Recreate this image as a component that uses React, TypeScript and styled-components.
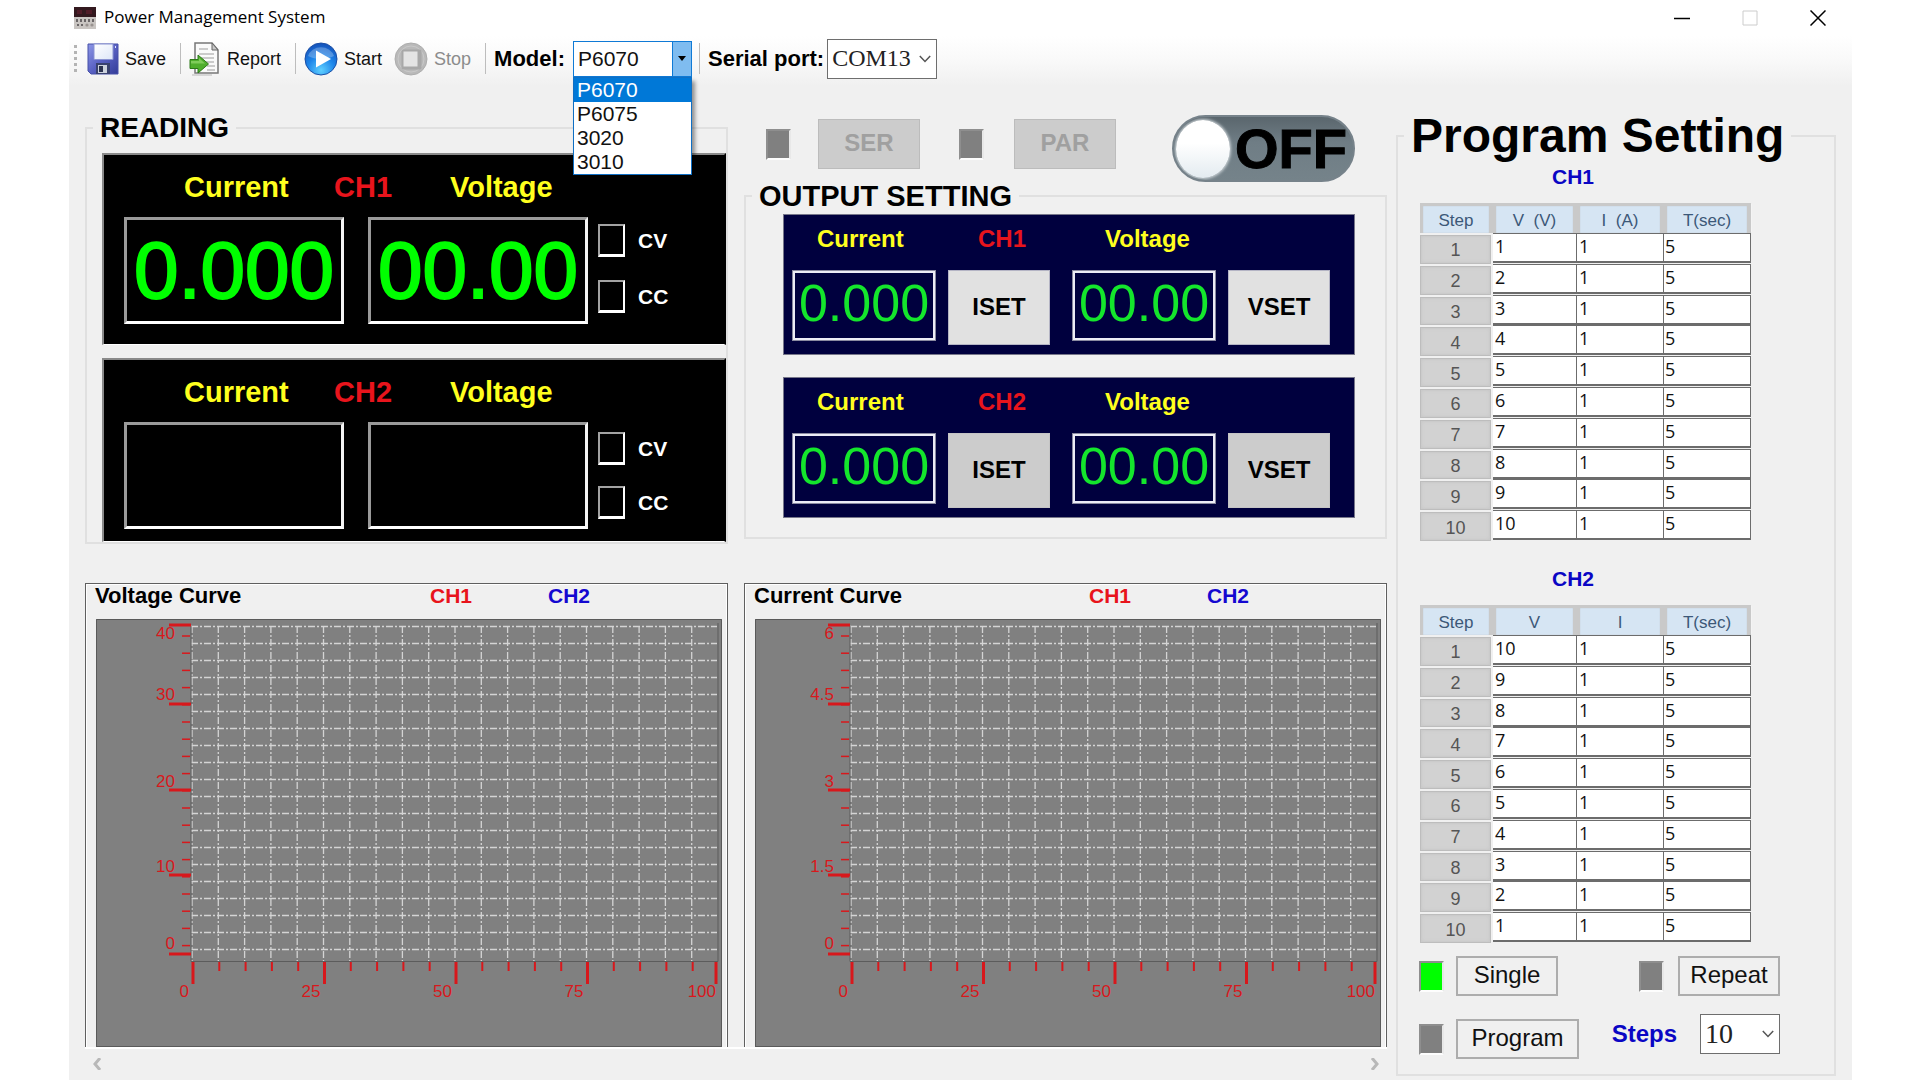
import React, { useState } from "react";
import styled, { createGlobalStyle } from "styled-components";

const SANS = '"Liberation Sans", Arial, sans-serif';
const SERIF = '"Liberation Serif", "Times New Roman", serif';
const UI = '"Open Sans", "Noto Sans", sans-serif';

const GlobalStyle = createGlobalStyle`
  *, *::before, *::after { box-sizing: border-box; }
  body { margin: 0; background: #fff; font-family: ${SANS}; color: #000; }
  button, input, select { font-family: inherit; margin: 0; border-radius: 0; }
`;

/* ---------- window frame ---------- */

const Window = styled.div`
  margin: 0 68px 0 69px;
  min-height: 100vh;
  background: linear-gradient(#fff 0, #fff 36px, #f9f9f9 60px, #f0f0f0 86px);
`;

const TitleBar = styled.header`
  display: flex;
  align-items: center;
  height: 36px;
  padding-left: 5px;
`;

const Title = styled.h1`
  flex: 1;
  margin: 0 0 2px 8px;
  font: 400 17px/24px ${UI};
`;

const CaptionButton = styled.button`
  display: grid;
  place-items: center;
  width: 68px;
  height: 34px;
  padding: 0;
  border: 0;
  background: none;
`;

/* ---------- toolbar ---------- */

const ToolBar = styled.div`
  display: flex;
  align-items: center;
  height: 45px;
  padding-left: 5px;
`;

const Grip = styled.span`
  width: 3px;
  height: 28px;
  margin-right: 10px;
  background: repeating-linear-gradient(#b4b4b4 0, #b4b4b4 3px, transparent 3px, transparent 6px);
`;

const ToolButton = styled.button`
  display: flex;
  align-items: center;
  gap: 6px;
  padding: 0 7px 0 0;
  border: 0;
  background: none;
  font-size: 18px;
  line-height: 22px;
  color: #111;
  & + & { margin-left: 5px; }
  &:disabled { color: #8c8c8c; }
`;

const Separator = styled.span`
  width: 1px;
  height: 31px;
  margin: 0 8px 0 7px;
  background: #bdbdbd;
`;

const ToolLabel = styled.label`
  font-size: 22px;
  font-weight: 700;
  line-height: 26px;
`;

const ComboWrap = styled.div`
  position: relative;
  width: 119px;
  margin-left: 8px;
`;

const ModelSelect = styled.select`
  display: block;
  appearance: none;
  width: 100%;
  height: 36px;
  padding: 0 24px 0 4px;
  border: 1px solid #0f7ad6;
  background: #fff;
  font-size: 21px;
  color: #111;
`;

const ComboArrow = styled.span`
  position: absolute;
  top: 1px;
  right: 1px;
  bottom: 1px;
  display: grid;
  place-items: center;
  width: 19px;
  border-left: 1px solid #0f7ad6;
  background: #7fbcf0;
  pointer-events: none;
`;

const ComboList = styled.ul`
  position: absolute;
  z-index: 5;
  top: 36px;
  left: 0;
  right: 0;
  margin: 0;
  padding: 0;
  border: 1px solid #0f6fc4;
  background: #fff;
  box-shadow: 3px 4px 4px rgba(0, 0, 0, 0.4);
  list-style: none;
`;

const ComboOption = styled.li<{ $active: boolean }>`
  padding-left: 3px;
  font-size: 21px;
  line-height: 24px;
  color: ${(p) => (p.$active ? "#fff" : "#111")};
  background: ${(p) => (p.$active ? "#0078d7" : "#fff")};
`;

const PlainCombo = styled.div<{ $width: number }>`
  position: relative;
  width: ${(p) => p.$width}px;
  ${ToolLabel} + & { margin-left: 3px; }
  svg {
    position: absolute;
    top: 14px;
    right: 6px;
    pointer-events: none;
  }
`;

const PlainSelect = styled.select<{ $size: number }>`
  display: block;
  appearance: none;
  width: 100%;
  height: 40px;
  padding: 0 0 2px 4px;
  border: 1px solid #6e6e6e;
  background: #fff;
  font-family: ${SERIF};
  font-size: ${(p) => p.$size}px;
  color: #222;
`;

/* ---------- page layout ---------- */

const Main = styled.main`
  display: grid;
  grid-template-columns: minmax(0, 1fr) 440px;
  align-items: start;
  gap: 9px;
  padding: 28px 16px 0;
`;

const Workspace = styled.div`
  display: grid;
  grid-template-columns: repeat(2, minmax(0, 1fr));
  align-items: start;
  column-gap: 16px;
  padding-top: 5px;
`;

const Group = styled.fieldset`
  min-width: 0;
  margin: 0;
  padding: 0;
  border: 2px solid #e0e0e0;
`;

const Legend = styled.legend<{ $size: number; $line: number }>`
  margin-left: 6px;
  padding: 0 7px;
  font-size: ${(p) => p.$size}px;
  font-weight: 700;
  line-height: ${(p) => p.$line}px;
  white-space: nowrap;
`;

/* ---------- reading ---------- */

const ReadingBody = styled.div`
  display: grid;
  gap: 13px;
  padding: 11px 0 0 15px;
`;

const ReadingPanel = styled.section<{ $bottom: number }>`
  padding: 17px 0 ${(p) => p.$bottom}px 20px;
  border: 2px solid #8a8a8a;
  border-right-color: #000;
  border-bottom: 1px solid #fff;
  background: #000;
`;

const ReadingHead = styled.div`
  display: grid;
  grid-template-columns: 150px 116px auto;
  margin-bottom: 15px;
  padding-left: 60px;
`;

const Caption = styled.span<{ $color: string; $size: number }>`
  font-size: ${(p) => p.$size}px;
  font-weight: 700;
  line-height: ${(p) => (p.$size > 28 ? 30 : 28)}px;
  color: ${(p) => p.$color};
`;

const ReadingRow = styled.div`
  display: flex;
  align-items: flex-start;
`;

const BigDisplay = styled.output`
  display: grid;
  place-items: center;
  width: 220px;
  height: 107px;
  margin-right: 24px;
  border: 3px solid #9a9a9a;
  border-right-color: #f4f4f4;
  border-bottom-color: #fff;
  font-size: 80px;
  line-height: 101px;
  color: #0f0;
  -webkit-text-stroke: 2px #0f0;
  & + & { margin-right: 10px; }
`;

const Lamps = styled.div<{ $top: number; $gap: number }>`
  display: grid;
  gap: ${(p) => p.$gap}px;
  padding-top: ${(p) => p.$top}px;
`;

const Lamp = styled.label`
  display: flex;
  align-items: center;
  gap: 13px;
  font-size: 21px;
  font-weight: 700;
  line-height: 24px;
  color: #fff;
`;

const LampBox = styled.input`
  appearance: none;
  width: 27px;
  height: 33px;
  border: 2px solid #a2a2a2;
  border-right-color: #fff;
  border-bottom: 3px solid #fff;
  background: #000;
`;

/* ---------- output ---------- */

const ModeBar = styled.div`
  display: flex;
  align-items: flex-start;
  justify-content: space-between;
  padding: 1px 32px 0 22px;
`;

const ModeSet = styled.div`
  display: flex;
  align-items: center;
  height: 58px;
  gap: 39px;
`;

const Pair = styled.div<{ $gap: number }>`
  display: flex;
  align-items: center;
  gap: ${(p) => p.$gap}px;
`;

const Led = styled.span<{ $on?: boolean }>`
  width: 25px;
  height: 31px;
  border: 2px solid #8e8e8e;
  border-right-color: #e8e8e8;
  border-bottom-color: #fdfdfd;
  background: ${(p) => (p.$on ? "#0f0" : "#808080")};
`;

const ModeButton = styled.button`
  width: 102px;
  height: 50px;
  padding: 0 0 2px;
  border: 1px solid #bcbcbc;
  background: #ccc;
  font-size: 24px;
  font-weight: 700;
  color: #a0a0a0;
`;

const PowerSwitch = styled.button`
  display: flex;
  align-items: center;
  gap: 5px;
  width: 183px;
  height: 67px;
  padding: 0 0 0 2px;
  border: 2px solid #76828a;
  border-radius: 34px;
  background: linear-gradient(#5a666d, #6f7d85 40%, #75838a);
  overflow: hidden;
  color: #000;
`;

const Knob = styled.span`
  flex: none;
  width: 54px;
  height: 58px;
  border-radius: 50%;
  background: linear-gradient(#fff 40%, #e3ebf0);
  box-shadow: 0 0 3px 1px #cfd6da;
`;

const SwitchText = styled.span`
  font-size: 56px;
  font-weight: 700;
  line-height: 60px;
  -webkit-text-stroke: 1px #000;
`;

const OutputBody = styled.div`
  display: grid;
  gap: 22px;
  padding: 4px 30px 19px 37px;
`;

const OutputPanel = styled.section`
  padding: 10px 8px 9px;
  border: 1px solid #77778a;
  background: #00003e;
`;

const OutputHead = styled.div`
  display: grid;
  grid-template-columns: 161px 127px auto;
  margin-bottom: 17px;
  padding-left: 25px;
`;

const OutputRow = styled.div`
  display: flex;
  gap: 22px;
`;

const OutputPair = styled.div`
  display: flex;
  align-items: flex-start;
  gap: 12px;
`;

const SmallDisplay = styled.output`
  display: grid;
  justify-items: center;
  width: 144px;
  height: 71px;
  border: 3px solid #ececf6;
  outline: 1px solid #8a8aa0;
  outline-offset: -1px;
  font-size: 52px;
  line-height: 60px;
  color: #14e62c;
`;

const SetButton = styled.button<{ $idle?: boolean }>`
  width: 102px;
  height: 75px;
  padding: 0 0 2px;
  border: 1px solid ${(p) => (p.$idle ? "#c4c4c4" : "#b4b4c4")};
  background: ${(p) => (p.$idle ? "#ccc" : "#e1e1e1")};
  font-size: 24px;
  font-weight: 700;
  color: #000;
`;

/* ---------- curves ---------- */

const CurvePanel = styled.section`
  margin-top: 39px;
  border: 1px solid #5f5f5f;
  border-bottom: 0;
  box-shadow: inset 1px 1px 0 #fff, inset -1px 0 0 #fff;
`;

const CurveHead = styled.div`
  display: grid;
  grid-template-columns: 335px 118px auto;
  align-items: center;
  height: 24px;
  margin-bottom: 11px;
  padding-left: 9px;
`;

const CurveTitle = styled.h2`
  margin: 0;
  font-size: 22px;
  line-height: 24px;
`;

const CurveKey = styled.span<{ $color: string }>`
  font-size: 21px;
  font-weight: 700;
  line-height: 24px;
  color: ${(p) => p.$color};
`;

const ChartArea = styled.div`
  margin: 0 5px 0 10px;
  background: #808080;
  svg { display: block; width: 100%; height: auto; }
`;

const ScrollStrip = styled.div`
  grid-column: 1 / -1;
  display: flex;
  justify-content: space-between;
  height: 33px;
  padding: 0 4px 2px;
  border-top: 2px solid #fff;
`;

const ScrollButton = styled.button`
  display: grid;
  place-items: center;
  width: 16px;
  padding: 0;
  border: 0;
  background: none;
`;

/* ---------- program ---------- */

const ProgramBody = styled.div`
  padding: 2px 54px 15px 22px;
`;

const ChannelTitle = styled.h3`
  margin: 0 0 14px;
  padding-left: 132px;
  font-size: 21px;
  line-height: 24px;
  color: #0a06c4;
`;

const StepTable = styled.table<{ $after: number }>`
  width: 331px;
  height: 338px;
  margin-bottom: ${(p) => p.$after}px;
  border-spacing: 0;
  table-layout: fixed;
`;

const HeadCell = styled.th<{ $width: number }>`
  width: ${(p) => p.$width}px;
  height: 30px;
  padding: 2px 0 0;
  border: 3px solid #c9c9c9;
  border-bottom: 0;
  border-right-width: 4px;
  background: #d6e5f3;
  box-shadow: inset 0 0 1px #aaa, 2px 0 0 -1px #f4f4f4;
  font-size: 17px;
  font-weight: 400;
  line-height: 24px;
  color: #3c5878;
  white-space: pre;
`;

const StepCell = styled.th`
  padding: 2px 0 0;
  border-top: 2px solid #f0f0f0;
  border-right: 2px solid #f0f0f0;
  background: #d2d2d2;
  box-shadow: inset 0 0 0 1px #bdbdbd, inset 0 0 3px 2px #c8c8c8;
  font-size: 18px;
  font-weight: 400;
  line-height: 20px;
  color: #555;
`;

const ValueCell = styled.td`
  padding: 0;
  vertical-align: top;
`;

const ValueInput = styled.input`
  display: block;
  width: 100%;
  height: 30px;
  padding: 0 0 3px 2px;
  border: 1px solid #6c6c6c;
  border-left-width: 0;
  border-bottom-width: 2px;
  background: #fff;
  font-family: ${UI};
  font-size: 18px;
  color: #111;
  td:last-child & { padding-left: 1px; }
`;

const Controls = styled.div`
  display: flex;
  justify-content: space-between;
  margin: 0 0 18px -1px;
  &:last-child { margin-bottom: 0; }
`;

const ProgramRow = styled(Controls)`
  height: 45px;
  > :first-child { align-self: flex-end; }
  > :last-child { align-self: flex-start; }
`;

const ActionButton = styled.button<{ $width: number }>`
  width: ${(p) => p.$width}px;
  height: 40px;
  padding: 0 0 2px;
  border: 2px solid #adadad;
  background: #f0f0f0;
  font-size: 24px;
  line-height: 28px;
  color: #111;
`;

const StepsLabel = styled.label`
  font-size: 24px;
  font-weight: 700;
  line-height: 28px;
  color: #0a06c4;
`;

/* ---------- icons ---------- */

const DeviceIcon = () => (
  <svg width="22" height="22" viewBox="0 0 22 22" aria-hidden="true">
    <rect width="22" height="22" rx="1" fill="#8d8788" />
    <rect width="22" height="10" fill="#33191f" />
    <path d="M3 3h5v4H3zM12 3h6v4h-6z" fill="#501c28" />
    <rect y="10" width="22" height="12" fill="#c9c5c2" />
    <path d="M2 12h2v3H2zM6 12h2v3H6zM10 12h2v3h-2zM14 12h2v3h-2zM18 12h2v3h-2zM3 17h2v2H3zM7 17h2v2H7z" fill="#6b6768" />
    <circle cx="13" cy="18" r="1.6" fill="#98928f" />
    <circle cx="18" cy="18" r="1.6" fill="#98928f" />
  </svg>
);

const SaveIcon = () => (
  <svg width="32" height="32" viewBox="0 0 32 32" aria-hidden="true">
    <defs>
      <linearGradient id="disk" x1="0" y1="0" x2="1" y2="1">
        <stop offset="0" stopColor="#8c96e6" />
        <stop offset=".5" stopColor="#5a62c4" />
        <stop offset="1" stopColor="#333c98" />
      </linearGradient>
      <linearGradient id="sheet" x1="0" y1="0" x2="1" y2="1">
        <stop offset="0" stopColor="#fff" />
        <stop offset="1" stopColor="#dde6f8" />
      </linearGradient>
    </defs>
    <path d="M1 1h30v30H4l-3-3z" fill="url(#disk)" stroke="#4750a8" />
    <path d="M7 1h19v15.500H7z" fill="url(#sheet)" stroke="#8a93d2" />
    <path d="M9 20h14v11H9z" fill="#39426f" />
    <path d="M11 22h9v8h-9z" fill="#cdd3dd" />
    <path d="M12 23h4v6h-4z" fill="#2c3350" />
    <path d="M28 3h1v2h-1z" fill="#dfe3ff" />
  </svg>
);

const ReportIcon = () => (
  <svg width="32" height="34" viewBox="0 0 32 34" aria-hidden="true">
    <path d="M6 1h17l6 7v23H6z" fill="#fafafa" stroke="#777" strokeWidth="1.500" />
    <path d="M23 1v7h6z" fill="#c8c8c8" stroke="#666" />
    <path d="M10 7h9M10 12h15M10 16h15M10 20h15M18 24h8M18 28h8" stroke="#bcbcbc" strokeWidth="1.500" />
    <path d="M3 33h20" stroke="#ccc" strokeWidth="1.500" />
    <path d="M1 17.500h8V13l10.500 9L9 31v-4.500H1z" fill="#4fae2c" stroke="#2c7a18" />
    <path d="M2 19h8v-3l6 5.500H2z" fill="#8fd66a" opacity=".75" />
  </svg>
);

const StartIcon = () => (
  <svg width="34" height="34" viewBox="0 0 34 34" aria-hidden="true">
    <defs>
      <radialGradient id="go" cx=".5" cy=".85" r=".85">
        <stop offset="0" stopColor="#5fd0ff" />
        <stop offset=".5" stopColor="#1e86ea" />
        <stop offset="1" stopColor="#1450b8" />
      </radialGradient>
    </defs>
    <circle cx="17" cy="17" r="16" fill="url(#go)" stroke="#1b4fa6" />
    <path d="M4 14a13.500 12 0 0 1 26 0c-7 4-19 4-26 0z" fill="#fff" opacity=".25" />
    <path d="M12 8.500 27 17 12 25.500z" fill="#fff" />
  </svg>
);

const StopIcon = () => (
  <svg width="34" height="34" viewBox="0 0 34 34" aria-hidden="true">
    <circle cx="17" cy="17" r="16" fill="#b9b9b9" stroke="#adadad" />
    <circle cx="17" cy="17" r="13" fill="none" stroke="#c9c9c9" />
    <rect x="7.500" y="7.500" width="20" height="20" rx="2" fill="#a8a8a8" />
    <rect x="9.500" y="9.500" width="14" height="15" fill="#e4e4e4" />
  </svg>
);

const ChevronDown = () => (
  <svg width="12" height="12" viewBox="0 0 12 12" aria-hidden="true">
    <path d="M.8 3 6 8.500 11.200 3" fill="none" stroke="#555" strokeWidth="1.500" />
  </svg>
);

/* ---------- chart ---------- */

const range = (n: number) => Array.from({ length: n }, (_, i) => i);

const Y_MAJORS = [6, 85, 171, 256, 335];
const Y_LABELS = [20, 81, 168, 253, 330];
const X_LABELS = ["0", "25", "50", "75", "100"];

const Chart = ({ labels, name }: { labels: string[]; name: string }) => {
  const left = 95;
  const top = 7;
  const right = 622;
  const bottom = 342;
  return (
    <svg viewBox="0 0 626 428" role="img" aria-label={name}>
      <path d="M.5 428V.5h625V428" fill="none" stroke="#5a5a5a" />
      <path d="M1 427.500h624" stroke="#5a5a5a" />
      <g stroke="#d4d4d4" strokeWidth="1.300" strokeDasharray="7 2 2 2">
        {range(20).map((i) => (
          <path key={`h${i}`} d={`M${left} ${top + 0.5 + i * 17}H${right - 1}`} />
        ))}
        {range(20).map((i) => (
          <path key={`v${i}`} d={`M${left + 1 + i * 26.3} ${top}V${bottom}`} />
        ))}
      </g>
      <path d={`M${left} ${top}V${bottom + 0.5}H${right}V${top - 3}`} fill="none" stroke="#5c5c5c" />
      <g stroke="#d8181c">
        {range(19).map((i) => (
          <path key={i} d={`M${left - 9} ${17 + i * 17.2}h8`} strokeWidth="1.500" />
        ))}
        {Y_MAJORS.map((y) => (
          <path key={y} d={`M${left - 22} ${y}h22`} strokeWidth="3" />
        ))}
        {range(21).map((i) =>
          i % 5 === 0 ? (
            <path key={i} d={`M${left + 2 + Math.min(i * 26.3, 523)} ${bottom + 1}v22`} strokeWidth="3" />
          ) : (
            <path key={i} d={`M${left + 2 + i * 26.3} ${bottom + 1}v9`} strokeWidth="2" />
          ),
        )}
      </g>
      <g fill="#d8181c" fontSize="17" fontFamily={SANS} textAnchor="end">
        {labels.map((t, i) => (
          <text key={t} x={left - 16} y={Y_LABELS[i]}>{t}</text>
        ))}
        {X_LABELS.map((t, i) => (
          <text key={t} x={i === 4 ? 620 : left - 2 + i * 131.5} y="378">{t}</text>
        ))}
      </g>
    </svg>
  );
};

/* ---------- sections ---------- */

const YELLOW = "#ffff1e";
const RED = "#e8141c";

const Reading = ({ ch, current, voltage, bottom, lampTop, lampGap }: {
  ch: string; current: string; voltage: string; bottom: number; lampTop: number; lampGap: number;
}) => (
  <ReadingPanel $bottom={bottom}>
    <ReadingHead>
      <Caption $size={29} $color={YELLOW}>Current</Caption>
      <Caption $size={29} $color={RED}>{ch}</Caption>
      <Caption $size={29} $color={YELLOW}>Voltage</Caption>
    </ReadingHead>
    <ReadingRow>
      <BigDisplay>{current}</BigDisplay>
      <BigDisplay>{voltage}</BigDisplay>
      <Lamps $top={lampTop} $gap={lampGap}>
        <Lamp><LampBox type="checkbox" />CV</Lamp>
        <Lamp><LampBox type="checkbox" />CC</Lamp>
      </Lamps>
    </ReadingRow>
  </ReadingPanel>
);

const Output = ({ ch, idle }: { ch: string; idle?: boolean }) => (
  <OutputPanel>
    <OutputHead>
      <Caption $size={24} $color={YELLOW}>Current</Caption>
      <Caption $size={24} $color={RED}>{ch}</Caption>
      <Caption $size={24} $color={YELLOW}>Voltage</Caption>
    </OutputHead>
    <OutputRow>
      <OutputPair>
        <SmallDisplay>0.000</SmallDisplay>
        <SetButton $idle={idle}>ISET</SetButton>
      </OutputPair>
      <OutputPair>
        <SmallDisplay>00.00</SmallDisplay>
        <SetButton $idle={idle}>VSET</SetButton>
      </OutputPair>
    </OutputRow>
  </OutputPanel>
);

const Curve = ({ title, labels }: { title: string; labels: string[] }) => (
  <CurvePanel>
    <CurveHead>
      <CurveTitle>{title}</CurveTitle>
      <CurveKey $color="#e8141c">CH1</CurveKey>
      <CurveKey $color="#1408d0">CH2</CurveKey>
    </CurveHead>
    <ChartArea><Chart labels={labels} name={title} /></ChartArea>
  </CurvePanel>
);

const Steps = ({ ch, heads, values, after }: { ch: string; heads: string[]; values: number[]; after: number }) => (
  <StepTable aria-label={`${ch} steps`} $after={after}>
    <thead>
      <tr>
        {heads.map((h, i) => (
          <HeadCell key={h} $width={[73, 84, 87, 87][i]} scope="col">{h}</HeadCell>
        ))}
      </tr>
    </thead>
    <tbody>
      {values.map((v, i) => (
        <tr key={i}>
          <StepCell scope="row">{i + 1}</StepCell>
          {[v, 1, 5].map((cell, c) => (
            <ValueCell key={c}>
              <ValueInput defaultValue={cell} aria-label={`${ch} step ${i + 1} ${heads[c + 1]}`} />
            </ValueCell>
          ))}
        </tr>
      ))}
    </tbody>
  </StepTable>
);

const MODELS = ["P6070", "P6075", "3020", "3010"];

export default function App() {
  const [model, setModel] = useState("P6070");
  return (
    <>
      <GlobalStyle />
      <Window>
        <TitleBar>
          <DeviceIcon />
          <Title>Power Management System</Title>
          <CaptionButton aria-label="Minimize">
            <svg width="16" height="16"><path d="M0 8.500h16" stroke="#000" strokeWidth="1.500" /></svg>
          </CaptionButton>
          <CaptionButton aria-label="Maximize" disabled>
            <svg width="16" height="16"><path d="M1 1h14v14H1z" fill="none" stroke="#ccc" /></svg>
          </CaptionButton>
          <CaptionButton aria-label="Close">
            <svg width="16" height="16"><path d="M.5.5l15 15M15.500.5l-15 15" stroke="#000" strokeWidth="1.500" /></svg>
          </CaptionButton>
        </TitleBar>

        <ToolBar role="toolbar" aria-label="Main">
          <Grip />
          <ToolButton><SaveIcon />Save</ToolButton>
          <Separator />
          <ToolButton><ReportIcon />Report</ToolButton>
          <Separator />
          <ToolButton><StartIcon />Start</ToolButton>
          <ToolButton disabled><StopIcon />Stop</ToolButton>
          <Separator />
          <ToolLabel htmlFor="model">Model:</ToolLabel>
          <ComboWrap>
            <ModelSelect id="model" value={model} onChange={(e) => setModel(e.target.value)}>
              {MODELS.map((m) => <option key={m}>{m}</option>)}
            </ModelSelect>
            <ComboArrow>
              <svg width="8" height="5"><path d="M0 0h8L4 5z" /></svg>
            </ComboArrow>
            <ComboList role="listbox" aria-label="Models">
              {MODELS.map((m) => (
                <ComboOption key={m} role="option" aria-selected={m === model} $active={m === model} onClick={() => setModel(m)}>
                  {m}
                </ComboOption>
              ))}
            </ComboList>
          </ComboWrap>
          <Separator />
          <ToolLabel htmlFor="port">Serial port:</ToolLabel>
          <PlainCombo $width={110}>
            <PlainSelect id="port" $size={24} defaultValue="COM13"><option>COM13</option></PlainSelect>
            <ChevronDown />
          </PlainCombo>
        </ToolBar>

        <Main>
          <Workspace>
            <Group>
              <Legend $size={28} $line={28}>READING</Legend>
              <ReadingBody>
                <Reading ch="CH1" current="0.000" voltage="00.00" bottom={20} lampTop={7} lampGap={23} />
                <Reading ch="CH2" current="" voltage="" bottom={12} lampTop={10} lampGap={21} />
              </ReadingBody>
            </Group>
            <div>
              <ModeBar>
                <ModeSet>
                  <Pair $gap={27}><Led /><ModeButton disabled>SER</ModeButton></Pair>
                  <Pair $gap={30}><Led /><ModeButton disabled>PAR</ModeButton></Pair>
                </ModeSet>
                <PowerSwitch role="switch" aria-checked={false} aria-label="OFF">
                  <Knob />
                  <SwitchText>OFF</SwitchText>
                </PowerSwitch>
              </ModeBar>
              <Group>
                <Legend $size={29} $line={28}>OUTPUT SETTING</Legend>
                <OutputBody>
                  <Output ch="CH1" />
                  <Output ch="CH2" idle />
                </OutputBody>
              </Group>
            </div>
            <Curve title="Voltage Curve" labels={["40", "30", "20", "10", "0"]} />
            <Curve title="Current Curve" labels={["6", "4.5", "3", "1.5", "0"]} />
            <ScrollStrip>
              <ScrollButton aria-label="Scroll left">
                <svg width="10" height="12"><path d="M8 0 3 6l5 6" fill="none" stroke="#b8b8b8" strokeWidth="3" /></svg>
              </ScrollButton>
              <ScrollButton aria-label="Scroll right">
                <svg width="10" height="12"><path d="m2 0 5 6-5 6" fill="none" stroke="#b8b8b8" strokeWidth="3" /></svg>
              </ScrollButton>
            </ScrollStrip>
          </Workspace>

          <Group>
            <Legend $size={48} $line={54}>Program Setting</Legend>
            <ProgramBody>
              <ChannelTitle>CH1</ChannelTitle>
              <Steps ch="CH1" heads={["Step", "V  (V)", "I  (A)", "T(sec)"]} values={[1, 2, 3, 4, 5, 6, 7, 8, 9, 10]} after={26} />
              <ChannelTitle>CH2</ChannelTitle>
              <Steps ch="CH2" heads={["Step", "V", "I", "T(sec)"]} values={[10, 9, 8, 7, 6, 5, 4, 3, 2, 1]} after={13} />
              <Controls>
                <Pair $gap={12}><Led $on /><ActionButton $width={102}>Single</ActionButton></Pair>
                <Pair $gap={14}><Led /><ActionButton $width={102}>Repeat</ActionButton></Pair>
              </Controls>
              <ProgramRow>
                <Pair $gap={12}><Led /><ActionButton $width={123}>Program</ActionButton></Pair>
                <Pair $gap={23}>
                  <StepsLabel htmlFor="steps">Steps</StepsLabel>
                  <PlainCombo $width={80}>
                    <PlainSelect id="steps" $size={28} defaultValue="10"><option>10</option></PlainSelect>
                    <ChevronDown />
                  </PlainCombo>
                </Pair>
              </ProgramRow>
            </ProgramBody>
          </Group>
        </Main>
      </Window>
    </>
  );
}
